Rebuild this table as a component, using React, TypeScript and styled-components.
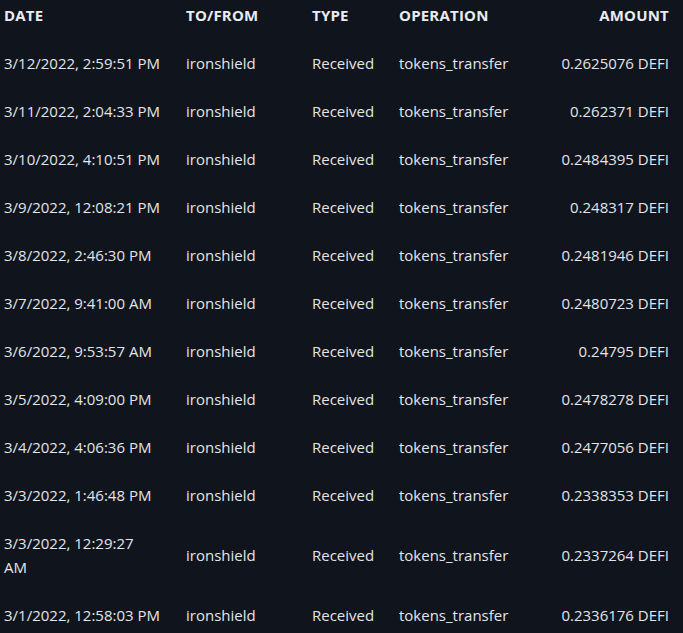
import React from 'react';
import styled, { createGlobalStyle } from 'styled-components';

const GlobalStyle = createGlobalStyle`
  html, body {
    margin: 0;
    padding: 0;
    background: #10141c;
  }
  body {
    font-family: "Open Sans", "Noto Sans", "Liberation Sans", sans-serif;
    color: #e1e5ea;
  }
`;

const Table = styled.div`
  width: 683px;
  display: grid;
  grid-template-columns: 182px 126px 87px 1fr 150px;
`;

const HeadCell = styled.div<{ $right?: boolean }>`
  padding: 3px ${(p) => (p.$right ? '14px' : '4px')} 12px 4px;
  font-size: 15px;
  font-weight: 700;
  line-height: 24px;
  letter-spacing: 0.2px;
  color: #e9ecf0;
  text-transform: uppercase;
  text-align: ${(p) => (p.$right ? 'right' : 'left')};
`;

const Cell = styled.div<{ $right?: boolean }>`
  display: flex;
  align-items: center;
  justify-content: ${(p) => (p.$right ? 'flex-end' : 'flex-start')};
  padding: 12px 14px 12px 4px;
  font-size: 15px;
  line-height: 24px;
  min-height: 48px;
  box-sizing: border-box;
`;

// the date column is just narrow enough that the longest stamp wraps
const DateCell = styled(Cell)`
  padding-right: 21.75px;
`;

type Tx = { date: string; amount: string };

const rows: Tx[] = [
  { date: '3/12/2022, 2:59:51 PM', amount: '0.2625076' },
  { date: '3/11/2022, 2:04:33 PM', amount: '0.262371' },
  { date: '3/10/2022, 4:10:51 PM', amount: '0.2484395' },
  { date: '3/9/2022, 12:08:21 PM', amount: '0.248317' },
  { date: '3/8/2022, 2:46:30 PM', amount: '0.2481946' },
  { date: '3/7/2022, 9:41:00 AM', amount: '0.2480723' },
  { date: '3/6/2022, 9:53:57 AM', amount: '0.24795' },
  { date: '3/5/2022, 4:09:00 PM', amount: '0.2478278' },
  { date: '3/4/2022, 4:06:36 PM', amount: '0.2477056' },
  { date: '3/3/2022, 1:46:48 PM', amount: '0.2338353' },
  { date: '3/3/2022, 12:29:27 AM', amount: '0.2337264' },
  { date: '3/1/2022, 12:58:03 PM', amount: '0.2336176' },
];

const App = () => (
  <>
    <GlobalStyle />
    <Table>
      <HeadCell>Date</HeadCell>
      <HeadCell>To/From</HeadCell>
      <HeadCell>Type</HeadCell>
      <HeadCell>Operation</HeadCell>
      <HeadCell $right>Amount</HeadCell>
      {rows.map((r) => (
        <React.Fragment key={r.date}>
          <DateCell>{r.date}</DateCell>
          <Cell>ironshield</Cell>
          <Cell>Received</Cell>
          <Cell>tokens_transfer</Cell>
          <Cell $right>{r.amount} DEFI</Cell>
        </React.Fragment>
      ))}
    </Table>
  </>
);

export default App;
